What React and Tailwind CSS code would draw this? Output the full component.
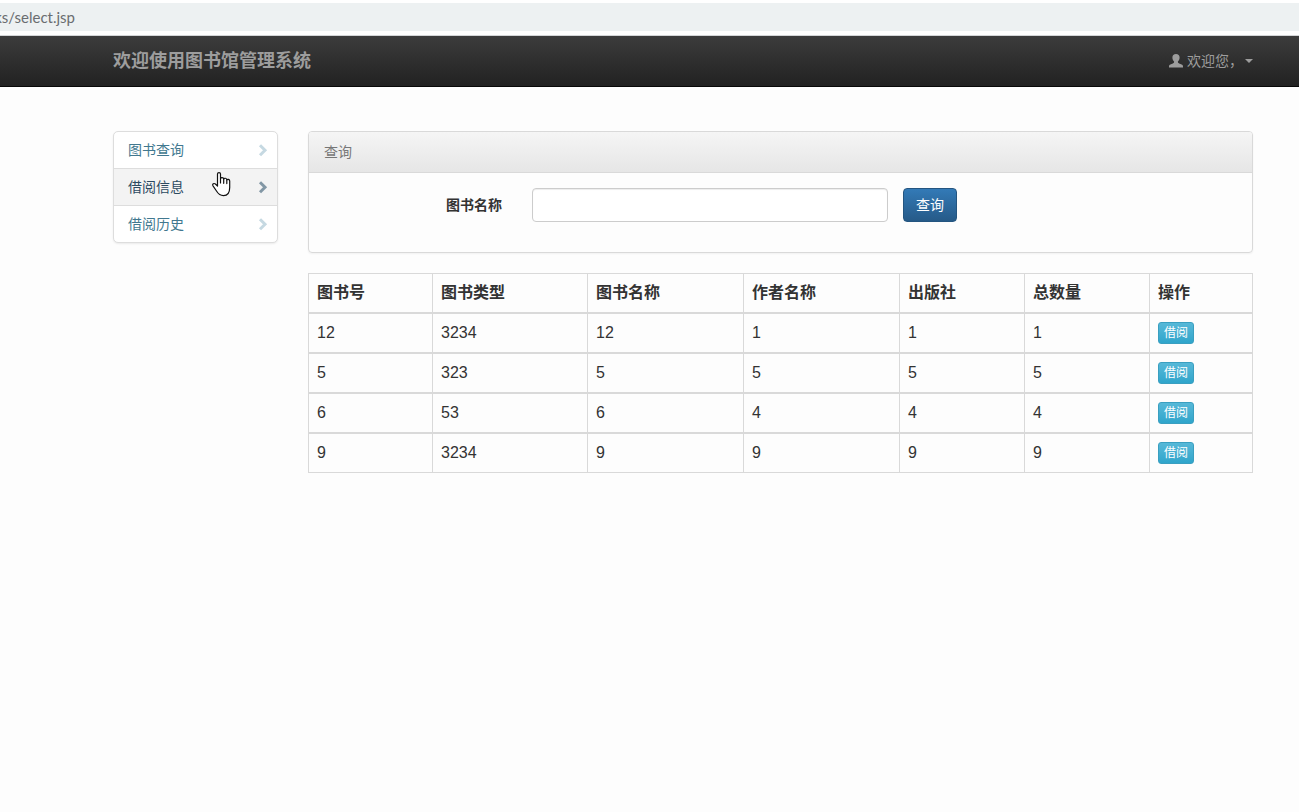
const books = [
  { id: '12', type: '3234', name: '12', author: '1', press: '1', total: '1' },
  { id: '5', type: '323', name: '5', author: '5', press: '5', total: '5' },
  { id: '6', type: '53', name: '6', author: '4', press: '4', total: '4' },
  { id: '9', type: '3234', name: '9', author: '9', press: '9', total: '9' },
];

const headings = ['图书号', '图书类型', '图书名称', '作者名称', '出版社', '总数量', '操作'];

const menu = [
  { label: '图书查询', active: false },
  { label: '借阅信息', active: true },
  { label: '借阅历史', active: false },
];

const cell = 'border-y border-r border-[#d9d9d9] p-2 text-left first:border-l';

function AddressBar() {
  return (
    <div className="border-b border-[#d4d6d8] bg-white pt-[3px] pb-1">
      <div className="h-7 bg-[#edf1f2]">
        <div className="flex w-[75px] justify-end overflow-hidden font-[Lato,sans-serif] text-[15px] leading-7 text-[#6a6d70]">
          ks/select.jsp
        </div>
      </div>
    </div>
  );
}

function UserIcon() {
  return (
    <svg className="h-[14px] w-[14px]" viewBox="0 0 14 14" fill="currentColor" aria-hidden="true">
      <path d="M7 0c2.300 0 3.600 1.400 3.600 3.500 0 1.700-.7 3.200-1.700 4 0 1 .2 1.400 1.200 1.900l2.500 1.100c.9.400 1.400 1 1.400 2V13.500H0V12.500c0-1 .5-1.600 1.400-2L3.900 9.400c1-.5 1.200-.9 1.200-1.900-1-.8-1.700-2.300-1.700-4C3.400 1.400 4.700 0 7 0z" />
    </svg>
  );
}

function Chevron() {
  return (
    <svg className="h-[14px] w-[10px]" viewBox="0 0 10 14" fill="none" stroke="currentColor" strokeWidth="3" aria-hidden="true">
      <path d="M2 2.300 7 7.300 2 12.300" />
    </svg>
  );
}

function HandCursor() {
  return (
    <svg
      className="pointer-events-none absolute top-[3px] left-[98px] h-[25px] w-[20px]"
      viewBox="0 0 20 25"
      fill="#fff"
      stroke="#111"
      strokeWidth="1.200"
      strokeLinejoin="round"
      strokeLinecap="round"
      aria-hidden="true"
    >
      <path d="M5.500 14V2C5.500.2 8.500.2 8.500 2V6.600C8.800 5.200 11.600 5.200 11.700 7C12.200 5.800 14.700 6 14.800 7.800C15.400 6.900 17.700 7.200 17.700 9V15.500C17.700 20.500 15.300 23.600 11.500 23.600C8 23.600 6.200 21.800 4.500 19L1 13.800C0 12.200 1.900 10.800 3.400 12Z" />
      <path d="M8.500 6.600V11M11.700 7V11.300M14.800 7.800V11.600" fill="none" />
    </svg>
  );
}

export default function App() {
  return (
    <div className="min-h-screen bg-[#fdfdfd] font-['Liberation_Sans','Noto_Sans_CJK_SC',sans-serif] text-sm leading-5 text-[#333]">
      <AddressBar />
      <header className="flex h-[51px] items-center justify-between border-b border-[#080808] bg-linear-to-b from-[#3c3c3c] to-[#222] pr-[46px] pl-[113px] text-[#9d9d9d]">
        <a href="#home" className="text-lg leading-5 font-bold">欢迎使用图书馆管理系统</a>
        <button type="button" className="flex items-center">
          <UserIcon />
          <span className="ml-1">欢迎您，</span>
          <svg className="ml-0.5 h-1 w-2" viewBox="0 0 8 4" fill="currentColor" aria-hidden="true">
            <path d="M0 0h8L4 4z" />
          </svg>
        </button>
      </header>

      <div className="flex items-start gap-[30px] pt-11 pr-[46px] pl-[113px]">
        <nav className="w-[165px] shrink-0 rounded-[5px] border border-[#ddd] bg-white shadow-[0_1px_2px_rgba(0,0,0,0.075)]">
          <ul className="divide-y divide-[#ddd]">
            {menu.map((item) => (
              <li key={item.label} className="relative">
                <a
                  href="#menu"
                  className={
                    item.active
                      ? 'flex h-9 items-center justify-between bg-[#f3f3f3] pr-[9px] pl-[14px] text-[#2c4a61]'
                      : 'flex h-9 items-center justify-between pr-[9px] pl-[14px] text-[#41788f]'
                  }
                >
                  {item.label}
                  <span className={item.active ? 'text-[#8297a5]' : 'text-[#c6d9e2]'}>
                    <Chevron />
                  </span>
                </a>
                {item.active && <HandCursor />}
              </li>
            ))}
          </ul>
        </nav>

        <main className="min-w-0 flex-1">
          <section className="rounded border border-[#d9d9d9] shadow-[0_1px_2px_rgba(0,0,0,0.05)]">
            <h2 className="rounded-t-[3px] border-b border-[#d9d9d9] bg-linear-to-b from-[#f5f5f5] to-[#e6e6e6] px-[15px] py-[10px] text-[#777]">
              查询
            </h2>
            <form className="flex items-center pt-[15px] pb-[30px]">
              <label htmlFor="book-name" className="w-[193px] text-right font-bold">图书名称</label>
              <input
                id="book-name"
                type="text"
                className="ml-[30px] h-[34px] w-[356px] rounded border border-[#ccc] bg-white px-3 shadow-[inset_0_1px_1px_rgba(0,0,0,0.075)]"
              />
              <button
                type="button"
                className="ml-[15px] h-[34px] w-[54px] rounded border border-[#245580] bg-linear-to-b from-[#337ab7] to-[#265a88] text-white"
              >
                查询
              </button>
            </form>
          </section>

          <table className="mt-5 w-full table-fixed border-separate border-spacing-0 text-base leading-[22px]">
            <colgroup>
              <col className="w-[125px]" />
              <col className="w-[155px]" />
              <col className="w-[156px]" />
              <col className="w-[156px]" />
              <col className="w-[125px]" />
              <col className="w-[125px]" />
              <col className="w-[103px]" />
            </colgroup>
            <thead>
              <tr>
                {headings.map((heading) => (
                  <th key={heading} className={cell}>{heading}</th>
                ))}
              </tr>
            </thead>
            <tbody>
              {books.map((book) => (
                <tr key={book.id}>
                  <td className={cell}>{book.id}</td>
                  <td className={cell}>{book.type}</td>
                  <td className={cell}>{book.name}</td>
                  <td className={cell}>{book.author}</td>
                  <td className={cell}>{book.press}</td>
                  <td className={cell}>{book.total}</td>
                  <td className={cell}>
                    <button
                      type="button"
                      className="block h-[22px] w-9 rounded-[3px] border border-[#3a9fc0] bg-linear-to-b from-[#56b8d8] to-[#2fa5cb] text-xs text-white"
                    >
                      借阅
                    </button>
                  </td>
                </tr>
              ))}
            </tbody>
          </table>
        </main>
      </div>
    </div>
  );
}
